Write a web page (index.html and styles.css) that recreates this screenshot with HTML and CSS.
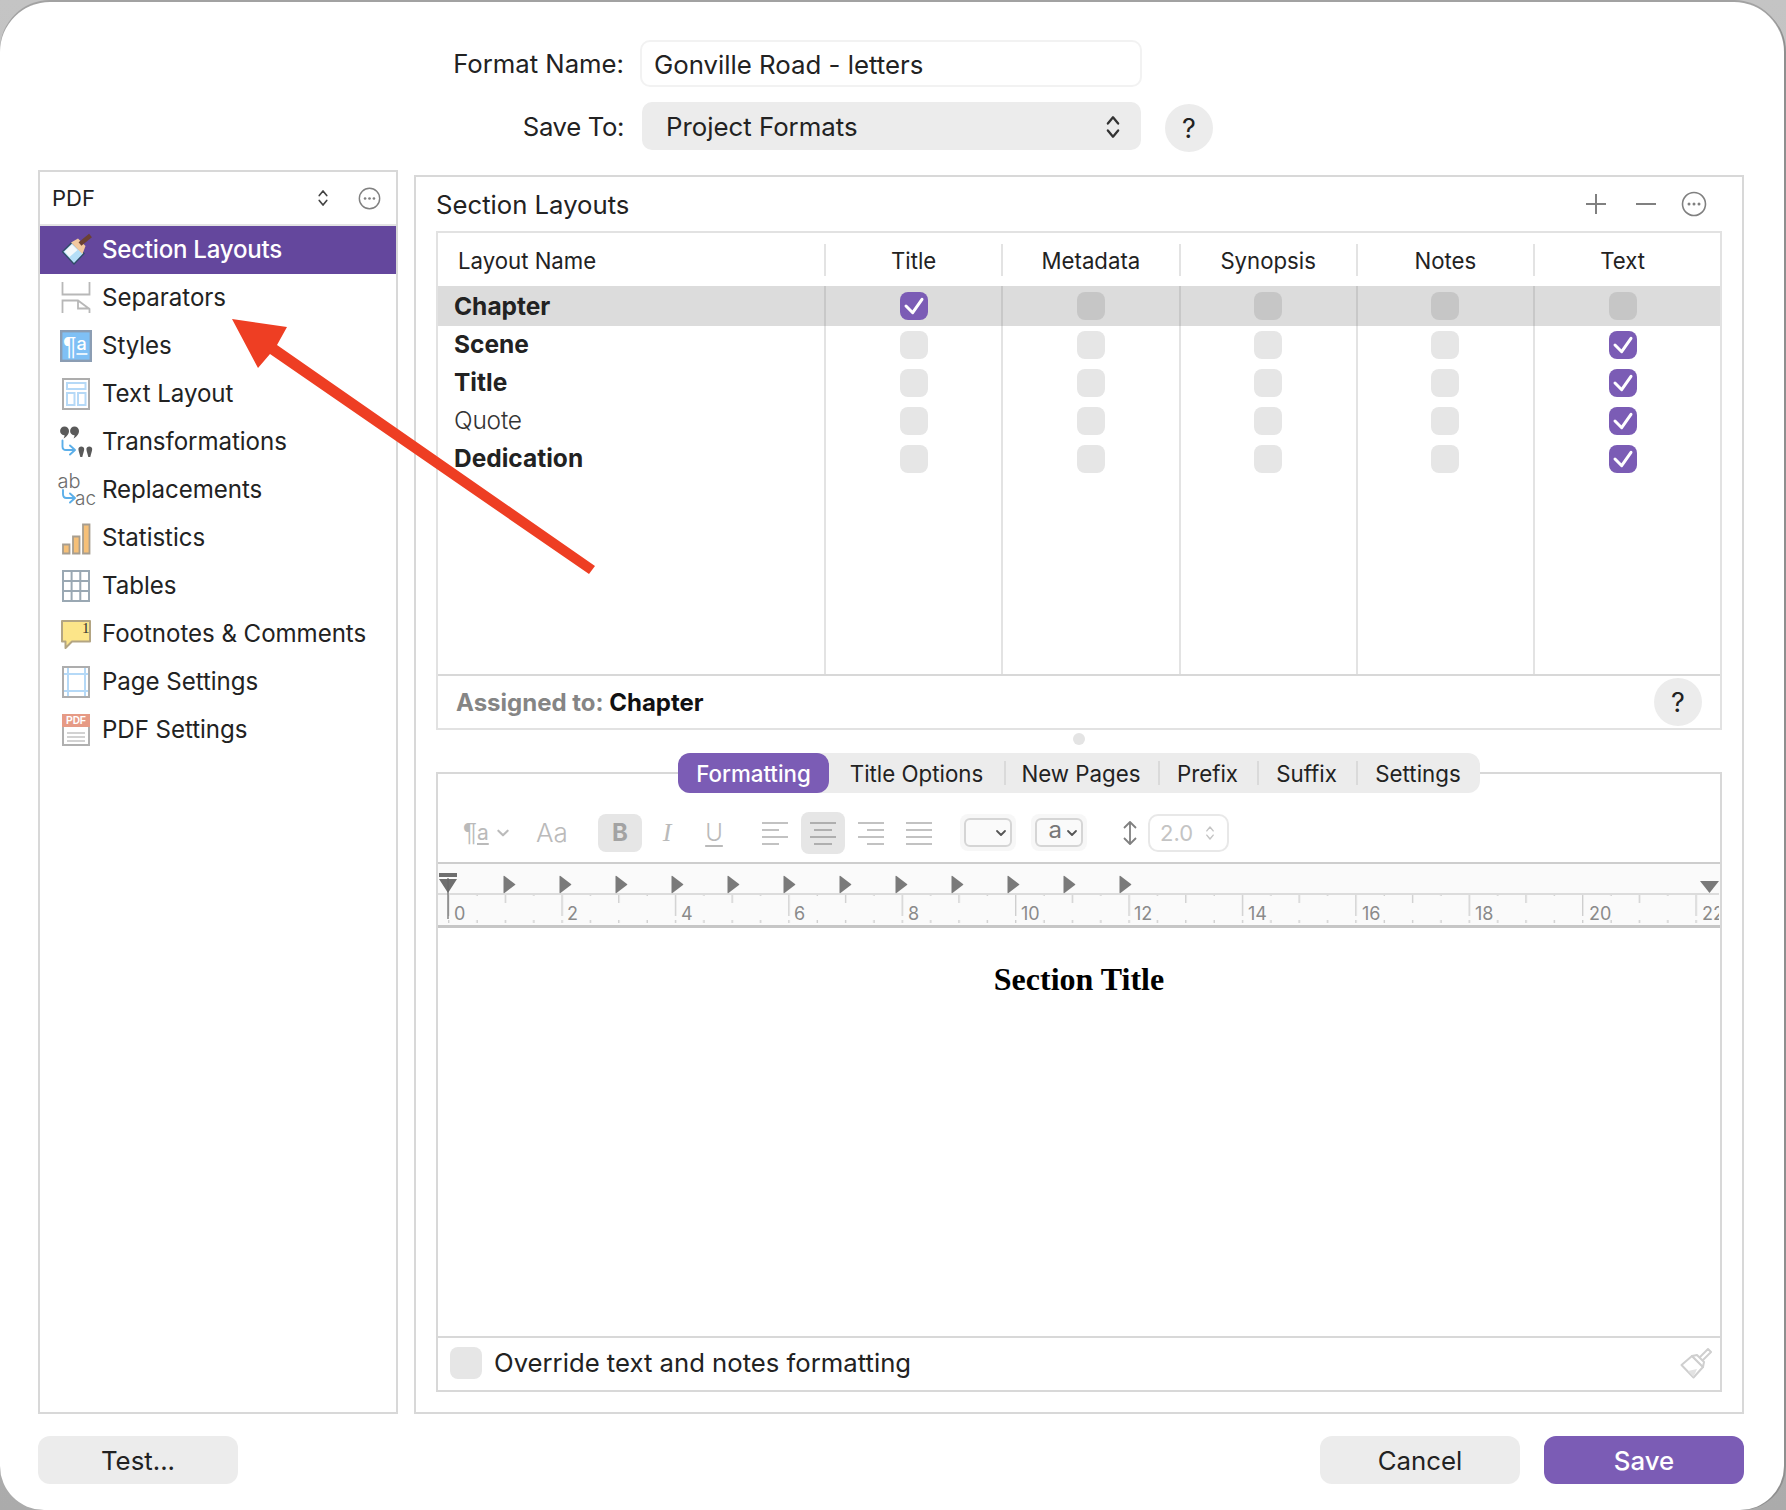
FILE: index.html
```html
<!DOCTYPE html>
<html lang="en">
<head>
<meta charset="utf-8">
<title>Format Editor</title>
<link rel="stylesheet" href="styles.css">
</head>
<body>
<svg class="defs" width="0" height="0" aria-hidden="true">
  <symbol id="tick" viewBox="0 0 28 28"><path d="M6 14l6.700 6.700L22 7.300" fill="none" stroke="#fff" stroke-width="3" stroke-linecap="round" stroke-linejoin="round"/></symbol>
  <symbol id="updown" viewBox="0 0 14 24"><path d="M2.500 9L7 3.500 11.500 9M2.500 15L7 20.500 11.500 15" fill="none" stroke="currentColor" stroke-width="2" stroke-linecap="round" stroke-linejoin="round"/></symbol>
  <symbol id="more" viewBox="0 0 26 26"><circle cx="13" cy="13" r="11.500" fill="none" stroke="#808080" stroke-width="1.600"/><circle cx="8" cy="13" r="1.500" fill="#808080"/><circle cx="13" cy="13" r="1.500" fill="#808080"/><circle cx="18" cy="13" r="1.500" fill="#808080"/></symbol>
  <symbol id="vee" viewBox="0 0 12 8"><path d="M2 2l4 4 4-4" fill="none" stroke="currentColor" stroke-width="1.800" stroke-linecap="round" stroke-linejoin="round"/></symbol>
</svg>
<div class="window">
  <div class="form">
    <label class="form-label">Format Name:</label>
    <div class="name-input">Gonville Road - letters</div>
    <span></span>
    <label class="form-label tight">Save To:</label>
    <div class="save-select"><span>Project Formats</span><svg class="updown-lg"><use href="#updown"/></svg></div>
    <button class="help help-top">?</button>
  </div>

  <div class="main">
    <aside class="side">
      <div class="side-head">
        <span class="side-title">PDF</span>
        <svg class="updown-sm"><use href="#updown"/></svg>
        <svg class="more-sm"><use href="#more"/></svg>
      </div>
      <ul class="side-list">
        <li class="side-item selected">
          <svg class="ico" viewBox="0 0 34 34"><path d="M3.500 18.700L13 9.500 25 20.500 15 31z" fill="#b5def7" stroke="#2f4a66" stroke-width="1.300"/><path d="M5.500 18.500L13 11.500l5.500 5.500-8 7z" fill="#f4f8fb"/><path d="M12 9.500l7-4 7.500 7.500-3 8z" fill="#f3c9a0"/><path d="M21 11L31.500 2.500" stroke="#6b4133" stroke-width="4.500"/></svg>
          <span>Section Layouts</span>
        </li>
        <li class="side-item">
          <svg class="ico" viewBox="0 0 34 34"><path d="M3.500 1v12.500h27V1M3.500 32V19.500H19L30.500 28v4M19 19.500v8h11.500" fill="none" stroke="#b8b8b8" stroke-width="1.800"/></svg>
          <span>Separators</span>
        </li>
        <li class="side-item">
          <svg class="ico" viewBox="0 0 34 34"><rect x="2.200" y="2.200" width="29.600" height="29.600" fill="#7fc0f5" stroke="#8b9db3" stroke-width="2.400"/><text class="ico-p" x="4" y="26" font-size="25" fill="#fff">¶</text><text class="ico-t" x="17.500" y="21" font-size="18" fill="#fff">a</text><path d="M17.500 25h11" stroke="#fff" stroke-width="1.600"/></svg>
          <span>Styles</span>
        </li>
        <li class="side-item">
          <svg class="ico" viewBox="0 0 34 34"><rect x="4" y="2" width="26" height="30" fill="#fff" stroke="#adadad" stroke-width="2"/><rect x="8" y="6" width="18.500" height="6" fill="none" stroke="#b5d9f7" stroke-width="2"/><rect x="8" y="16" width="7.500" height="12" fill="none" stroke="#b5d9f7" stroke-width="2"/><rect x="19" y="16" width="7.500" height="12" fill="none" stroke="#b5d9f7" stroke-width="2"/></svg>
          <span>Text Layout</span>
        </li>
        <li class="side-item">
          <svg class="ico" viewBox="0 0 34 34"><path d="M5.500 1.500a4.500 4.500 0 0 1 4.500 4.500c0 3.500-3 6-5.500 7.500.8-1.500 1.200-2.500 1-3.200a4.400 4.400 0 0 1 0-8.800zM15.500 1.500a4.500 4.500 0 0 1 4.500 4.500c0 3.500-3 6-5.500 7.500.8-1.500 1.200-2.500 1-3.200a4.400 4.400 0 0 1 0-8.800z" fill="#5a5a5a"/><path d="M3.500 15.500v6c0 2.500 1.500 3.500 3.500 3.500h8.500M11 20.500l5 4.500-5 4.500" fill="none" stroke="#5cafe9" stroke-width="1.900" stroke-linecap="round" stroke-linejoin="round"/><path d="M22.300 21.500c1.600 0 2.900 1 2.900 2.500 0 2-1.400 5.500-1.900 8h-2c-.5-2.500-1.900-6-1.900-8 0-1.500 1.300-2.500 2.900-2.500zM30.300 21.500c1.600 0 2.900 1 2.900 2.500 0 2-1.400 5.500-1.900 8h-2c-.5-2.500-1.900-6-1.900-8 0-1.500 1.300-2.500 2.900-2.500z" fill="#5a5a5a"/></svg>
          <span>Transformations</span>
        </li>
        <li class="side-item">
          <svg class="ico" viewBox="0 0 34 34"><text class="ico-l" x="-1.500" y="15" font-size="20" fill="#6c6c6c">ab</text><path d="M4 17v4c0 2.500 1 4 3.500 4H15M11 20.500l5 4.500-5 4.500" fill="none" stroke="#5cafe9" stroke-width="1.900" stroke-linecap="round" stroke-linejoin="round"/><text class="ico-l" x="16" y="32" font-size="19" fill="#6c6c6c">ac</text></svg>
          <span>Replacements</span>
        </li>
        <li class="side-item">
          <svg class="ico" viewBox="0 0 34 34"><path d="M4 23.500h6.500v9H4zM14 15.500h6.500v17H14zM24 3.500h6.500v29H24z" fill="#f6c078" stroke="#a79e90" stroke-width="1.800"/></svg>
          <span>Statistics</span>
        </li>
        <li class="side-item">
          <svg class="ico" viewBox="0 0 34 34"><path d="M4 2h26v30H4zM12.600 2v30M21.300 2v30M4 12h26M4 22h26" fill="none" stroke="#9aa8b3" stroke-width="2"/></svg>
          <span>Tables</span>
        </li>
        <li class="side-item">
          <svg class="ico" viewBox="0 0 34 34"><path d="M3 4h28v20.500H13L6.500 31v-6.500H3z" fill="#fce589" stroke="#b3a583" stroke-width="2" stroke-linejoin="round"/><text class="ico-s" x="23" y="16" font-size="15" fill="#333">1</text></svg>
          <span>Footnotes &amp; Comments</span>
        </li>
        <li class="side-item">
          <svg class="ico" viewBox="0 0 34 34"><path d="M9 2v30M26 2v30M4 9h26M4 26h26" stroke="#b5d9f7" stroke-width="2"/><rect x="4" y="2" width="26" height="30" fill="none" stroke="#adadad" stroke-width="2"/></svg>
          <span>Page Settings</span>
        </li>
        <li class="side-item">
          <svg class="ico" viewBox="0 0 34 34"><rect x="4" y="2" width="26" height="30" fill="#fff" stroke="#b0b0b0" stroke-width="2"/><rect x="3" y="1" width="28" height="13" fill="#e69a85"/><text class="ico-b" x="17" y="11" font-size="10" fill="#fff" text-anchor="middle">PDF</text><path d="M8 20h18M8 24h18M8 28h18" stroke="#c4c4c4" stroke-width="1.500"/></svg>
          <span>PDF Settings</span>
        </li>
      </ul>
    </aside>

    <section class="panel">
      <header class="panel-head">
        <h2 class="panel-title">Section Layouts</h2>
        <svg class="tool-ico plus" viewBox="0 0 22 22"><path d="M11 1v20M1 11h20" stroke="#808080" stroke-width="2"/></svg>
        <svg class="tool-ico minus" viewBox="0 0 22 22"><path d="M1 11h20" stroke="#808080" stroke-width="2"/></svg>
        <svg class="more-lg"><use href="#more"/></svg>
      </header>

      <div class="table">
        <div class="t-row t-head">
          <div class="t-name">Layout Name</div>
          <div class="t-col">Title</div><div class="t-col">Metadata</div><div class="t-col">Synopsis</div><div class="t-col">Notes</div><div class="t-col">Text</div>
        </div>
        <div class="t-row t-first t-sel">
          <div class="t-name b">Chapter</div>
          <div class="t-c"><span class="box on"><svg><use href="#tick"/></svg></span></div><div class="t-c"><span class="box"></span></div><div class="t-c"><span class="box"></span></div><div class="t-c"><span class="box"></span></div><div class="t-c"><span class="box"></span></div>
        </div>
        <div class="t-row">
          <div class="t-name b">Scene</div>
          <div class="t-c"><span class="box"></span></div><div class="t-c"><span class="box"></span></div><div class="t-c"><span class="box"></span></div><div class="t-c"><span class="box"></span></div><div class="t-c"><span class="box on"><svg><use href="#tick"/></svg></span></div>
        </div>
        <div class="t-row">
          <div class="t-name b">Title</div>
          <div class="t-c"><span class="box"></span></div><div class="t-c"><span class="box"></span></div><div class="t-c"><span class="box"></span></div><div class="t-c"><span class="box"></span></div><div class="t-c"><span class="box on"><svg><use href="#tick"/></svg></span></div>
        </div>
        <div class="t-row">
          <div class="t-name light">Quote</div>
          <div class="t-c"><span class="box"></span></div><div class="t-c"><span class="box"></span></div><div class="t-c"><span class="box"></span></div><div class="t-c"><span class="box"></span></div><div class="t-c"><span class="box on"><svg><use href="#tick"/></svg></span></div>
        </div>
        <div class="t-row">
          <div class="t-name b">Dedication</div>
          <div class="t-c"><span class="box"></span></div><div class="t-c"><span class="box"></span></div><div class="t-c"><span class="box"></span></div><div class="t-c"><span class="box"></span></div><div class="t-c"><span class="box on"><svg><use href="#tick"/></svg></span></div>
        </div>
        <div class="t-row t-fill">
          <div class="t-name"></div><div class="t-c"></div><div class="t-c"></div><div class="t-c"></div><div class="t-c"></div><div class="t-c"></div>
        </div>
        <div class="assigned">
          <span class="assigned-text"><span class="assigned-key">Assigned to:</span> Chapter</span>
          <button class="help">?</button>
        </div>
      </div>

      <div class="splitter"><span class="dot"></span></div>

      <div class="editor">
        <div class="tabs">
          <span class="tab active">Formatting</span>
          <span class="tab t-options">Title Options</span>
          <span class="tab t-pages sep">New Pages</span>
          <span class="tab t-prefix sep">Prefix</span>
          <span class="tab t-suffix sep">Suffix</span>
          <span class="tab t-settings sep">Settings</span>
        </div>

        <div class="toolbar">
          <div class="pstyle"><span class="pil">¶</span><span class="pa">a</span><svg class="vee-g"><use href="#vee"/></svg></div>
          <span class="aa">Aa</span>
          <div class="btn-group font-group">
            <span class="tb-btn tb-on bold-btn">B</span>
            <span class="tb-btn italic-btn">I</span>
            <span class="tb-btn under-btn">U</span>
          </div>
          <div class="btn-group align-group">
            <span class="tb-btn"><svg class="align" viewBox="0 0 26 24"><path d="M0 2h26M0 9h17M0 16h26M0 23h17"/></svg></span>
            <span class="tb-btn tb-on tall"><svg class="align dark" viewBox="0 0 26 24"><path d="M0 2h26M4 9h18M0 16h26M4 23h18"/></svg></span>
            <span class="tb-btn"><svg class="align" viewBox="0 0 26 24"><path d="M0 2h26M9 9h17M0 16h26M9 23h17"/></svg></span>
            <span class="tb-btn"><svg class="align" viewBox="0 0 26 24"><path d="M0 2h26M0 9h26M0 16h26M0 23h26"/></svg></span>
          </div>
          <div class="mini-select first"><div class="mini-inner"><svg class="vee-d"><use href="#vee"/></svg></div></div>
          <div class="mini-select second"><div class="mini-inner"><span class="mini-a">a</span><svg class="vee-d"><use href="#vee"/></svg></div></div>
          <svg class="line-ico" viewBox="0 0 18 26"><path d="M9 2v22M3 8l6-6 6 6M3 18l6 6 6-6" fill="none" stroke="#808080" stroke-width="1.800" stroke-linejoin="round"/></svg>
          <div class="spacing"><span>2.0</span><svg class="updown-xs"><use href="#updown"/></svg></div>
        </div>

        <div class="ruler">
          <svg class="ruler-svg" width="1281" height="63" viewBox="0 0 1281 63">
            <defs>
              <pattern id="ticks" x="10" y="0" width="113.400" height="28" patternUnits="userSpaceOnUse">
                <path d="M.75 0v24M29.100 0v4M57.450 0v11M85.800 0v4" stroke="#c8c8c8" stroke-width="1.200"/>
              </pattern>
            </defs>
            <path d="M0 30h1281" stroke="#dcdcdc" stroke-width="2"/>
            <rect x="0" y="31" width="1281" height="28" fill="url(#ticks)"/>
            <g class="tri"><path id="tab" d="M65.500 12.500q0-1 1-.5l10.500 8q.8.500 0 1l-10.500 8q-1 .5-1-.5z"/><use href="#tab" x="56"/><use href="#tab" x="112"/><use href="#tab" x="168"/><use href="#tab" x="224"/><use href="#tab" x="280"/><use href="#tab" x="336"/><use href="#tab" x="392"/><use href="#tab" x="448"/><use href="#tab" x="504"/><use href="#tab" x="560"/><use href="#tab" x="616"/><path d="M1262 17h19l-9.500 12z"/></g>
            <path d="M1 9h18v4H1zM1 15h18l-9 14z" fill="#6e6e6e"/>
            <path d="M10 14v41" stroke="#666" stroke-width="1.200"/>
            <g class="nums"><text x="16" y="56">0</text><text x="129" y="56">2</text><text x="243" y="56">4</text><text x="356" y="56">6</text><text x="470" y="56">8</text><text x="583" y="56">10</text><text x="696" y="56">12</text><text x="810" y="56">14</text><text x="924" y="56">16</text><text x="1037" y="56">18</text><text x="1151" y="56">20</text><text x="1264" y="56">22</text></g>
          </svg>
        </div>

        <div class="page"><p class="section-title">Section Title</p></div>

        <div class="override">
          <span class="box big"></span>
          <span class="override-label">Override text and notes formatting</span>
          <svg class="brush" viewBox="0 0 32 32"><path d="M1.500 18L12 9l11 11-9.500 10.500z" fill="#fff" stroke="#cfcfcf" stroke-width="2" stroke-linejoin="round"/><path d="M8 24l9-2-3.500 8z" fill="#e2e2e2"/><path d="M12 9l5-1 7 7-1 5zM20 10l8-8 3 3-8 8" fill="#fff" stroke="#cfcfcf" stroke-width="2" stroke-linejoin="round"/></svg>
        </div>
      </div>
    </section>
  </div>

  <footer class="actions">
    <button class="act">Test...</button>
    <span class="grow"></span>
    <button class="act">Cancel</button>
    <button class="act primary">Save</button>
  </footer>

  <svg class="annot" viewBox="0 0 1784 1510" aria-hidden="true"><path d="M232 319l55 8-10 18 318 221-6 8-319-220-12 14z" fill="#ee3e23"/></svg>
</div>
</body>
</html>
```

FILE: styles.css
```css
* { box-sizing: border-box; }
html, body { margin: 0; height: 100%; overflow: hidden; }
body {
  background: linear-gradient(#c4c4c4, #ababab);
  font-family: Inter, "Noto Sans", sans-serif;
  color: #222;
}
.defs { position: absolute; }
button { font: inherit; color: inherit; border: 0; padding: 0; }

.window {
  position: relative;
  width: 1784px;
  height: 1508px;
  margin-top: 2px;
  padding: 38px 40px 0 38px;
  background: #fff;
  border-radius: 50px 50px 44px 44px;
  box-shadow: 0 -2px 0 #a2a2a2, 2px 0 0 #8f8f8f;
}

/* top form */
.form {
  display: grid;
  grid-template-columns: 586px 504px 72px;
  grid-template-rows: 47px 48px;
  row-gap: 15px;
  align-items: center;
  font-size: 25.800px;
}
.form-label { justify-self: end; font-size: 25.700px; }
.tight { letter-spacing: -.35px; }
.name-input {
  margin-left: 16px;
  height: 47px;
  width: 502px;
  padding-left: 12px;
  line-height: 45px;
  border: 2px solid #f2f2f2;
  border-radius: 10px;
}
.save-select {
  margin-left: 18px;
  width: 499px;
  height: 48px;
  padding: 1px 20px 0 24px;
  display: flex;
  align-items: center;
  justify-content: space-between;
  background: #ececec;
  border-radius: 10px;
}
.updown-lg { width: 16px; height: 28px; color: #333; }
.help {
  width: 48px;
  height: 48px;
  border-radius: 50%;
  background: #ececec;
  font-size: 27px;
  font-weight: 400;
  color: #222;
}
.help-top { margin: 4px 0 0 37px; }

/* main */
.main { display: flex; gap: 16px; margin-top: 20px; height: 1244px; }

.side { width: 360px; border: 2px solid #d8d8d8; }
.side-head {
  height: 54px;
  display: flex;
  align-items: center;
  padding-left: 12px;
  border-bottom: 2px solid #e4e4e4;
}
.side-title { font-size: 22px; flex: 1; }
.updown-sm { width: 12px; height: 20px; color: #444; margin-right: 29px; }
.more-sm { width: 23px; height: 23px; margin-right: 15px; }
.side-list { list-style: none; margin: 0; padding: 0; }
.side-item {
  height: 48px;
  display: flex;
  align-items: center;
  gap: 9px;
  padding-left: 19px;
  font-size: 24.100px;
  letter-spacing: -.05px;
}
.side-item span { margin-top: -1px; }
.side-item.selected { background: #64479d; color: #fff; font-weight: 500; letter-spacing: -.25px; }
.ico { width: 34px; height: 34px; flex: none; overflow: visible; }
.ico-t { font-family: Inter, sans-serif; font-weight: 500; }
.ico-p { font-family: "Liberation Sans", sans-serif; }
.ico-l { font-family: Inter, sans-serif; font-weight: 300; }
.ico-s { font-family: "Liberation Serif", serif; }
.ico-b { font-family: "Liberation Sans", sans-serif; font-weight: 700; }

/* right panel */
.panel {
  width: 1330px;
  margin-top: 5px;
  padding: 0 20px;
  border: 2px solid #d8d8d8;
  display: flex;
  flex-direction: column;
}
.panel-head { height: 54px; display: flex; align-items: center; flex: none; }
.panel-title { margin: 0; flex: 1; font-size: 25.700px; font-weight: 400; }
.tool-ico { width: 22px; height: 22px; }
.plus { margin-right: 28px; }
.minus { margin-right: 24px; }
.more-lg { width: 26px; height: 26px; margin-right: 15px; }

.table {
  height: 499px;
  flex: none;
  border: 2px solid #e2e2e2;
  display: flex;
  flex-direction: column;
}
.t-row {
  display: grid;
  grid-template-columns: 386px repeat(5, 177.250px) 1fr;
  height: 38px;
  font-size: 24.500px;
  align-items: stretch;
}
.t-head { height: 53px; padding-top: 11px; font-size: 22.200px; }
.t-head > div { height: 32px; display: flex; align-items: center; }
.t-name { display: flex; align-items: center; padding: 0 0 2px 16px; }
.t-first .t-name { padding-bottom: 1px; }
.t-head .t-name { padding: 0 0 0 20px; }
.t-col, .t-c {
  display: flex;
  align-items: center;
  justify-content: center;
  border-left: 2px solid #e3e3e3;
}
.t-first { height: 40px; }
.t-sel { background: #dcdcdc; }
.t-sel .t-c { border-left-color: #c8c8c8; }
.t-sel .box:not(.on) { background: #c6c6c6; }
.t-fill { flex: 1; }
.b { font-weight: 700; }
.light { font-weight: 300; color: #333; letter-spacing: -.2px; }
.box {
  width: 28px;
  height: 28px;
  display: block;
  background: #e6e6e6;
  border-radius: 8px;
}
.box.on { background: #7b5cb5; }
.box svg { width: 28px; height: 28px; display: block; }
.assigned {
  height: 54px;
  flex: none;
  display: flex;
  align-items: center;
  justify-content: space-between;
  padding: 0 18px;
  border-top: 2px solid #d8d8d8;
  font-size: 24px;
  font-weight: 700;
  color: #111;
}
.assigned-key { color: #858585; }

.splitter { height: 42px; flex: none; padding-top: 3px; display: flex; justify-content: center; }
.dot { width: 12px; height: 12px; border-radius: 50%; background: #e4e4e4; }

/* editor */
.editor {
  height: 620px;
  flex: none;
  border: 2px solid #d8d8d8;
  display: flex;
  flex-direction: column;
}
.tabs {
  align-self: center;
  height: 40px;
  width: 802px;
  margin-top: -21px;
  flex: none;
  display: flex;
  align-items: center;
  background: #ececec;
  border-radius: 12px;
  font-size: 22.300px;
}
.tab { height: 100%; display: flex; align-items: center; justify-content: center; }
.tab.active { width: 151px; background: #7b5cb5; color: #fff; border-radius: 12px; font-weight: 500; }
.t-options { width: 175px; }
.t-pages { width: 154px; }
.t-prefix { width: 99px; }
.t-suffix { width: 99px; }
.t-settings { width: 124px; }
.sep { background: linear-gradient(#dadada, #dadada) left center / 2px 24px no-repeat; }

.toolbar {
  height: 69px;
  flex: none;
  padding: 10px 0 0 23px;
  display: flex;
  align-items: center;
  color: #bababa;
}
.pstyle { width: 53px; height: 30px; display: flex; align-items: center; font-size: 26px; }
.pil { font-family: "Liberation Sans", sans-serif; margin-left: 2px; }
.pa { font-size: 21px; text-decoration: underline; text-underline-offset: 3px; margin-right: 7px; }
.vee-g { width: 14px; height: 10px; color: #bbb; }
.aa { margin-left: 22px; width: 30px; font-size: 26px; font-weight: 300; }
.btn-group { display: flex; align-items: center; }
.font-group { margin-left: 32px; gap: 3px; }
.align-group { margin-left: 17px; gap: 4px; }
.tb-btn {
  width: 44px;
  height: 38px;
  display: flex;
  align-items: center;
  justify-content: center;
  border-radius: 8px;
  font-size: 24px;
}
.tb-on { background: #e6e6e6; }
.tall { height: 42px; }
.bold-btn { font-weight: 700; color: #a3a3a3; }
.italic-btn { font-family: "Liberation Serif", serif; font-style: italic; font-size: 26px; }
.under-btn { text-decoration: underline; text-underline-offset: 4px; font-weight: 300; }
.align { width: 26px; height: 24px; overflow: visible; fill: none; stroke: #c2c2c2; stroke-width: 2; }
.align.dark { stroke: #afafaf; }
.mini-select {
  width: 56px;
  height: 37px;
  padding: 4px;
  background: #f7f7f7;
  border-radius: 8px;
}
.first { margin-left: 19px; }
.second { margin-left: 15px; width: 56px; }
.mini-inner {
  height: 29px;
  display: flex;
  align-items: center;
  justify-content: flex-end;
  gap: 4px;
  padding-right: 3px;
  border: 2px solid #d5d5d5;
  border-radius: 6px;
  background: #fafafa;
}
.mini-a { font-size: 24px; color: #777; margin-top: -6px; }
.vee-d { width: 12px; height: 8px; color: #555; }
.line-ico { width: 18px; height: 26px; margin-left: 34px; }
.spacing {
  width: 81px;
  height: 38px;
  margin-left: 9px;
  padding: 0 12px 0 10px;
  display: flex;
  align-items: center;
  justify-content: space-between;
  border: 2px solid #e8e8e8;
  border-radius: 10px;
  color: #c4c4c4;
  font-size: 22px;
}
.updown-xs { width: 10px; height: 18px; color: #c4c4c4; }

.ruler {
  height: 66px;
  flex: none;
  background: #fafafa;
  border-top: 2px solid #cdcdcd;
  border-bottom: 3px solid #c6c6c6;
  overflow: hidden;
}
.ruler-svg { display: block; }
.tri { fill: #7a7a7a; }
.nums { font-family: Inter, sans-serif; font-size: 18px; fill: #8a8a8a; }

.page { flex: 1; padding-top: 31px; }
.section-title {
  margin: 0;
  text-align: center;
  font-family: "Liberation Serif", serif;
  font-weight: 700;
  font-size: 32px;
  line-height: 40px;
  color: #000;
}
.override {
  height: 54px;
  flex: none;
  display: flex;
  align-items: center;
  padding: 0 8px 2px 12px;
  border-top: 2px solid #d8d8d8;
  font-size: 25.700px;
}
.box.big { width: 32px; height: 32px; margin-right: 12px; }
.override-label { flex: 1; margin-top: -1px; }
.brush { width: 32px; height: 32px; }

/* footer */
.actions { display: flex; gap: 24px; margin-top: 22px; }
.act {
  width: 200px;
  height: 48px;
  padding-top: 1px;
  border-radius: 12px;
  background: #ececec;
  font-size: 25.800px;
  color: #222;
}
.primary { background: #7b5cb5; color: #fff; font-weight: 500; }
.grow { flex: 1; }

.annot { position: absolute; inset: -2px 0 0 0; width: 1784px; height: 1510px; pointer-events: none; }
```
